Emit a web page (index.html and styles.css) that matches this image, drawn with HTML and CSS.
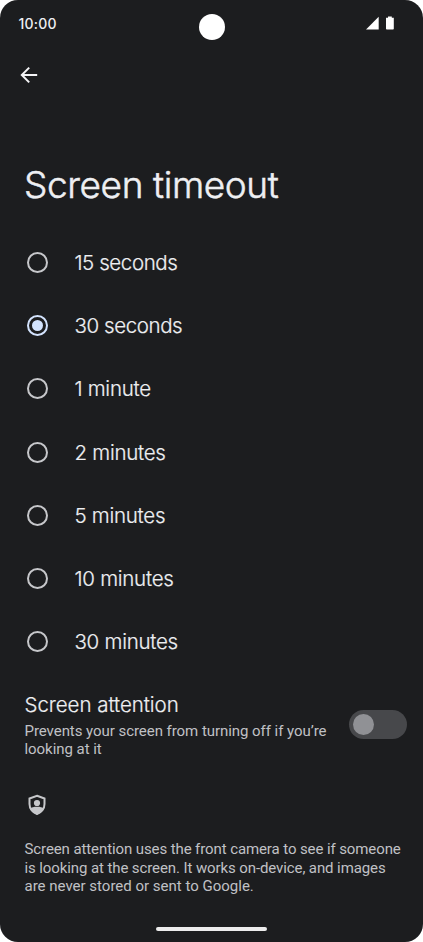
FILE: index.html
```
<!DOCTYPE html>
<html lang="en">
    <head>
        <meta charset="utf-8">
        <meta name="viewport" content="width=device-width">
        <title>Screen timeout</title>
        <link rel="stylesheet" href="styles.css">
    </head>
    <body>
        <div class="phone">
            <div class="status-bar">
                <span class="clock">10:00</span>
                <span class="camera"></span>
                <svg class="status-icons" width="30" height="16" viewBox="0 0 30 16">
                    <path d="M1 14.5L13.700 1.800v12.700z"/>
                    <path d="M21 2.800h2V1.600h3.800v1.200h2v10.900q0 0.800-0.800 0.800h-6.200q-0.800 0-0.800-0.800z"/>
                </svg>
            </div>

            <div class="toolbar">
                <svg class="back" width="18" height="18" viewBox="0 0 18 18">
                    <path d="M17.200 9H2.200M9.200 1.600L1.800 9L9.200 16.400"/>
                </svg>
            </div>

            <h1 class="title">Screen timeout</h1>

            <div class="options">
                <label class="option"><input type="radio" name="timeout"><span>15 seconds</span></label>
                <label class="option"><input type="radio" name="timeout" checked><span>30 seconds</span></label>
                <label class="option minutes"><input type="radio" name="timeout"><span>1 minute</span></label>
                <label class="option minutes"><input type="radio" name="timeout"><span>2 minutes</span></label>
                <label class="option minutes"><input type="radio" name="timeout"><span>5 minutes</span></label>
                <label class="option minutes"><input type="radio" name="timeout"><span>10 minutes</span></label>
                <label class="option minutes"><input type="radio" name="timeout"><span>30 minutes</span></label>
            </div>

            <div class="attention">
                <div class="attention-text">
                    <h2>Screen attention</h2>
                    <p>Prevents your screen from turning off if you’re<br>looking at it</p>
                </div>
                <div class="switch"><span class="thumb"></span></div>
            </div>

            <div class="footer">
                <svg class="shield" width="18" height="22" viewBox="0 0 18 22">
                    <path class="outline" d="M9 1.700L16.500 4.500V10c0 4.600-3 8.600-7.500 10C4.500 18.600 1.500 14.600 1.500 10V4.500z"/>
                    <circle cx="9" cy="9" r="3.100"/>
                    <path d="M2 14.400C3.400 13.400 6 12.800 9 12.800s5.600 0.600 7 1.600C14.500 17.600 11.700 19.500 9 20.400C6.300 19.500 3.500 17.600 2 14.400z"/>
                </svg>
                <p>Screen attention uses the front camera to see if someone<br>is looking at the screen. It works on-device, and images<br><span class="last-line">are never stored or sent to Google.</span></p>
            </div>

            <div class="home-bar"></div>
        </div>
    </body>
</html>
```
FILE: styles.css
```
* {
    box-sizing: border-box;
}
body {
    margin: 0;
    background-color: white;
    font-family: 'Inter', sans-serif;
    color: #eeeff2;
}
h1, h2, p {
    margin: 0;
    font-weight: normal;
    white-space: nowrap;
}
.phone {
    display: flex;
    flex-direction: column;
    height: 942px;
    border-radius: 18px;
    background-color: #1c1d1f;
}
.status-bar {
    position: relative;
    display: flex;
    justify-content: space-between;
    align-items: center;
    height: 46px;
    padding: 0 28px 0 18.500px;
}
.clock {
    font-size: 14px;
    font-weight: 500;
    letter-spacing: 0.2px;
}
.camera { /* punch hole, sits over the status bar */
    position: absolute;
    top: 14px;
    left: 198.500px;
    width: 26px;
    height: 26px;
    border-radius: 50%;
    background-color: white;
}
.status-icons {
    fill: white;
}
.toolbar {
    height: 60px;
    padding: 20px 0 0 20px;
}
.back {
    display: block;
    fill: none;
    stroke: #f4f4f6;
    stroke-width: 2;
}
.title, .option, .attention h2 {
    font-weight: 300;
    -webkit-text-stroke: 0.2px #eeeff2;
}
.title {
    height: 125px;
    padding: 56px 0 0 24px;
    font-size: 37px;
    line-height: 46px;
    letter-spacing: -0.4px;
    -webkit-text-stroke-width: 0.5px;
}
.option {
    display: flex;
    align-items: center;
    gap: 26.500px;
    height: 63.2px;
    padding-left: 26.900px;
    font-size: 20.500px;
    letter-spacing: -0.4px;
}
.option.minutes {
    letter-spacing: -0.250px;
}
.option input {
    appearance: none;
    display: grid;
    place-content: center;
    width: 21px;
    height: 21px;
    margin: 0;
    border: 2px solid #c6c7ca;
    border-radius: 50%;
}
.option input:checked {
    border-color: #d3e3fd;
}
.option input:checked::before {
    content: '';
    width: 11px;
    height: 11px;
    border-radius: 50%;
    background-color: #d3e3fd;
}
.attention {
    display: flex;
    justify-content: space-between;
    align-items: center;
    height: 79px;
    margin-top: 13px;
    padding: 0 16px 0 24.500px;
}
.attention h2 {
    font-size: 20.500px;
    line-height: 24px;
    margin-bottom: 5px;
    letter-spacing: -0.050px;
}
.attention p, .footer p {
    font-family: 'Roboto', sans-serif;
    font-size: 15px;
    line-height: 18.400px;
    letter-spacing: -0.050px;
    color: #c0c1c5;
}
.switch {
    display: flex;
    align-items: center;
    width: 58px;
    height: 29px;
    margin-bottom: 2px;
    padding-left: 4px;
    border-radius: 15px;
    background-color: #47484b;
}
.thumb {
    width: 21px;
    height: 21px;
    border-radius: 50%;
    background-color: #909195;
}
.footer {
    padding: 29px 0 0 24.500px;
}
.footer p {
    letter-spacing: -0.100px;
}
.footer .last-line {
    letter-spacing: 0;
}
.shield {
    display: block;
    margin: 0 0 24px 3.500px;
    fill: #c6c7ca;
}
.shield .outline {
    fill: none;
    stroke: #c6c7ca;
    stroke-width: 2;
}
.home-bar {
    width: 111px;
    height: 4px;
    margin: auto auto 11px;
    border-radius: 2px;
    background-color: #ececec;
}
```
